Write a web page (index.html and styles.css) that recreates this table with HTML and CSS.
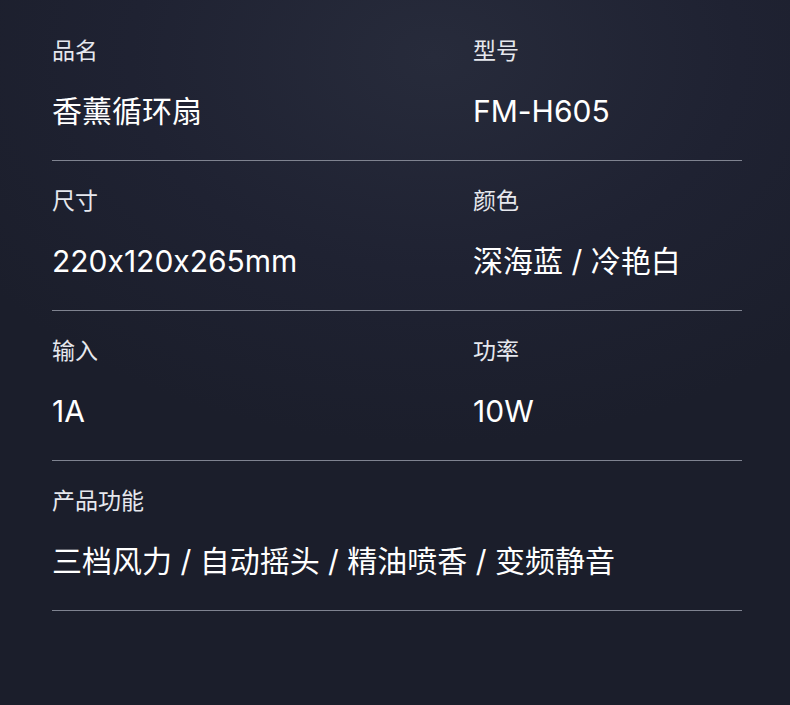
FILE: index.html
```html
<!DOCTYPE html>
<html lang="zh-CN">
<head>
    <meta charset="UTF-8">
    <meta name="viewport" content="width=device-width, initial-scale=1.0">
    <title>产品参数</title>
    <link rel="stylesheet" href="styles.css">
</head>
<body>
    <div class="specs">
        <div class="row">
            <div class="cell">
                <div class="label">品名</div>
                <div class="value">香薰循环扇</div>
            </div>
            <div class="cell">
                <div class="label">型号</div>
                <div class="value">FM-H605</div>
            </div>
        </div>
        <div class="row">
            <div class="cell">
                <div class="label">尺寸</div>
                <div class="value">220x120x265mm</div>
            </div>
            <div class="cell">
                <div class="label">颜色</div>
                <div class="value">深海蓝 / 冷艳白</div>
            </div>
        </div>
        <div class="row">
            <div class="cell">
                <div class="label">输入</div>
                <div class="value">1A</div>
            </div>
            <div class="cell">
                <div class="label">功率</div>
                <div class="value">10W</div>
            </div>
        </div>
        <div class="row single">
            <div class="cell">
                <div class="label">产品功能</div>
                <div class="value">三档风力 / 自动摇头 / 精油喷香 / 变频静音</div>
            </div>
        </div>
    </div>
</body>
</html>
```

FILE: styles.css
```css
html, body {
    height: 100%;
}
body {
    margin: 0;
    padding: 11px 0 0 0;
    box-sizing: border-box;
    font-family: Inter, "Noto Sans CJK SC", sans-serif;
    font-feature-settings: "calt" 0;
    color: #ffffff;
    background-color: #1c1f2d;
    background-image: radial-gradient(ellipse 70% 55% at 55% 8%, #272b3b 0%, #1f2232 55%, #1b1e2b 100%);
}
.specs {
    width: 690px;
    margin-left: 52px;
}
.row {
    display: grid;
    grid-template-columns: 421px 1fr;
    padding: 25px 0 29px;
    border-bottom: 1px solid #7f8390;
}
.row.single {
    grid-template-columns: 1fr;
}
.label {
    font-size: 23px;
    line-height: 30px;
    color: #e6e8ee;
}
.value {
    margin-top: 25px;
    font-size: 30px;
    line-height: 40px;
    color: #ffffff;
}
```
